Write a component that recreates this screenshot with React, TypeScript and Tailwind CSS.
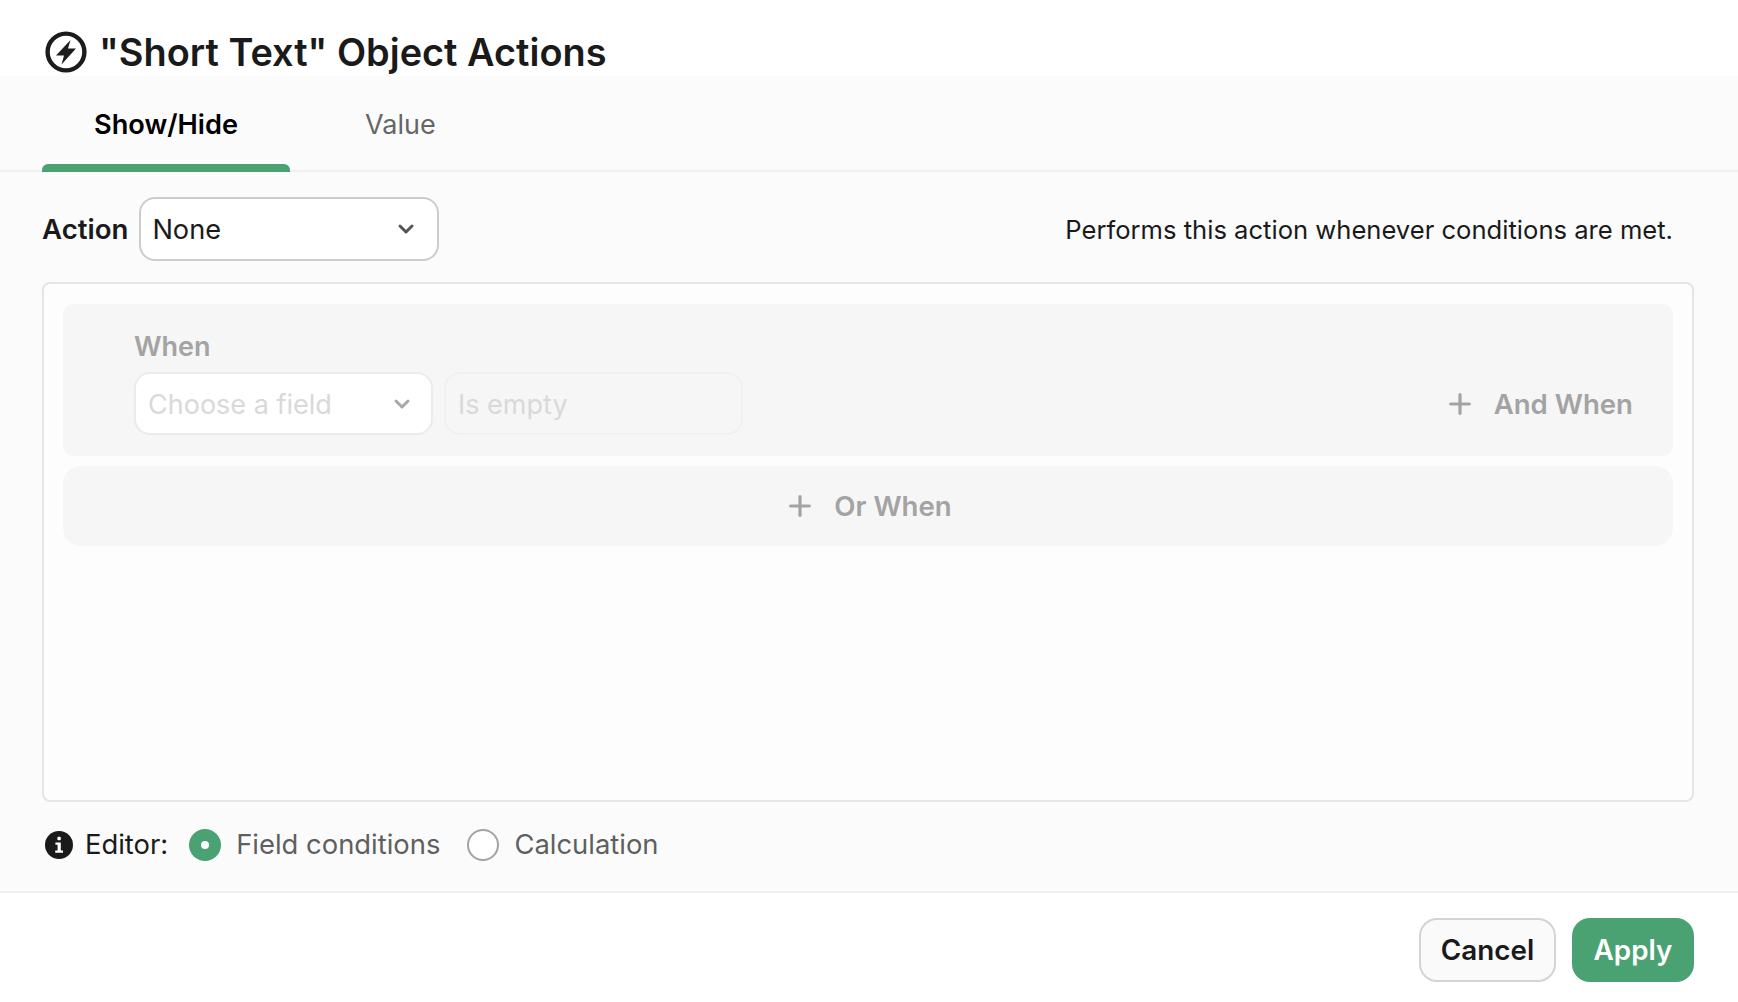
import React from 'react';
import { ChevronDown, Plus } from 'lucide-react';

function ActionsIcon() {
  return (
    <svg width="42" height="42" viewBox="0 0 42 42" fill="none" className="shrink-0">
      <circle cx="21" cy="21" r="18.4" stroke="#1c1c1c" strokeWidth="4.4" />
      <path d="M25.5 9 L11 24.5 H19 L16.5 33.5 L31 17.5 H23 Z" fill="#1c1c1c" />
    </svg>
  );
}

function InfoIcon() {
  return (
    <svg width="28" height="28" viewBox="0 0 28 28" className="shrink-0">
      <circle cx="14" cy="14" r="14" fill="#1a1a1a" />
      <rect x="12.4" y="5.8" width="3.4" height="3.4" rx="1" fill="#fff" />
      <path d="M10.4 11.4 H15.8 V19.4 H18 V21.8 H10.2 V19.4 H12.6 V13.8 H10.4 Z" fill="#fff" />
    </svg>
  );
}

export default function App() {
  return (
    <div className="flex h-[1002px] w-[1738px] flex-col overflow-hidden bg-white font-['Inter',sans-serif] text-[#1a1a1a]">
      {/* Title */}
      <div className="flex h-[76px] items-start gap-[12px] pl-[45px] pt-[31px]">
        <ActionsIcon />
        <h1 className="text-[37.9px] leading-[42px] font-semibold">"Short Text" Object Actions</h1>
      </div>

      {/* Body */}
      <div className="flex h-[817px] flex-col border-b-2 border-[#f0f0f0] bg-[#fbfbfb]">
        <div className="flex h-[96px] items-stretch border-b-2 border-[#f0f0f0] pl-[42px]">
          <div className="relative flex w-[248px] items-start justify-center pt-[32px] text-[27.2px] leading-[34px] font-semibold text-black">
            Show/Hide
            <div className="absolute right-0 bottom-[-2px] left-0 h-[8px] rounded-t-[6px] bg-[#4aa172]" />
          </div>
          <div className="ml-[75px] pt-[32px] text-[27px] leading-[34px] text-[#666666]">Value</div>
        </div>

        <div className="flex items-center justify-between pt-[25px] pr-[65px] pl-[42px]">
          <div className="flex items-center gap-[11px]">
            <span className="pt-[2px] text-[27.6px] font-semibold">Action</span>
            <div className="flex h-[64px] w-[300px] items-center justify-between rounded-[16px] border-2 border-[#cccccc] bg-white pr-[19px] pl-[11px]">
              <span className="pt-[2px] text-[27.2px]">None</span>
              <ChevronDown size={24} strokeWidth={3} color="#555555" />
            </div>
          </div>
          <span className="pt-[2px] text-[25.6px]">Performs this action whenever conditions are met.</span>
        </div>

        <div className="mt-[21px] mr-[44px] ml-[42px] flex h-[520px] flex-col gap-[10px] rounded-[8px] border-2 border-[#e5e5e5] bg-[#fdfdfd] px-[19px] pt-[20px]">
          <div className="flex h-[152px] items-end justify-between rounded-[10px] bg-[#f6f6f6] pr-[40px] pb-[21px] pl-[71px]">
            <div className="flex flex-col">
              <span className="mb-[8px] text-[27px] leading-[34px] font-semibold text-[#a3a3a3]">When</span>
              <div className="flex gap-[11px]">
                <div className="flex h-[63px] w-[299px] items-center justify-between rounded-[16px] border-2 border-[#ebebeb] bg-white pr-[17px] pl-[12px]">
                  <span className="pt-[3px] text-[27px] text-[#d9d9d9]">Choose a field</span>
                  <ChevronDown size={24} strokeWidth={3} color="#a8a8a8" />
                </div>
                <div className="flex h-[63px] w-[299px] items-center rounded-[16px] border-2 border-[#f0f0f0] bg-[#f6f6f6] pl-[12px]">
                  <span className="pt-[3px] text-[27px] text-[#d9d9d9]">Is empty</span>
                </div>
              </div>
            </div>
            <div className="flex h-[63px] items-center gap-[18px] text-[27.6px] font-semibold text-[#a3a3a3]">
              <Plus size={32} strokeWidth={2.4} color="#a3a3a3" />
              <span className="pt-[2px]">And When</span>
            </div>
          </div>
          <div className="flex h-[80px] items-center justify-center gap-[18px] rounded-[18px] bg-[#f6f6f6] text-[27.6px] font-semibold text-[#a3a3a3]">
            <Plus size={32} strokeWidth={2.4} color="#a3a3a3" />
            <span className="pt-[2px]">Or When</span>
          </div>
        </div>

        <div className="mt-[22px] flex items-center pl-[45px]">
          <InfoIcon />
          <span className="ml-[12px] text-[27.4px]">Editor:</span>
          <span className="ml-[21px] flex h-[32px] w-[32px] items-center justify-center rounded-full bg-[#4aa172]">
            <span className="h-[8px] w-[8px] rounded-full bg-white" />
          </span>
          <span className="ml-[15px] text-[27.4px] text-[#5f5f5f]">Field conditions</span>
          <span className="ml-[27px] h-[32px] w-[32px] rounded-full border-2 border-[#a3a3a3] bg-white" />
          <span className="ml-[15px] text-[27.4px] text-[#5f5f5f]">Calculation</span>
        </div>
      </div>

      {/* Footer */}
      <div className="flex justify-end gap-[16px] pt-[25px] pr-[44px]">
        <button className="flex h-[64px] w-[137px] items-center justify-center rounded-[18px] border-2 border-[#d4d4d4] bg-[#fafafa] pt-[2px] text-[27.8px] font-semibold text-[#1a1a1a]">
          Cancel
        </button>
        <button className="flex h-[64px] w-[122px] items-center justify-center rounded-[18px] bg-[#4aa172] pt-[2px] text-[27.8px] font-semibold text-white">
          Apply
        </button>
      </div>
    </div>
  );
}
